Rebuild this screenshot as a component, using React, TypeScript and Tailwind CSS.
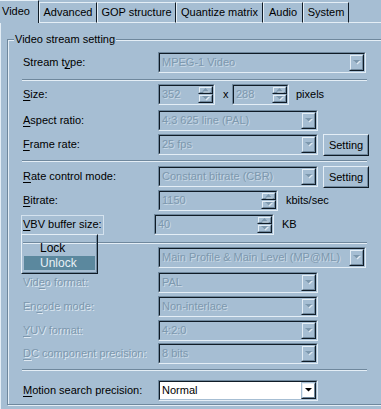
import React from 'react';

// classic Win9x 3D colours, bluish scheme
// face #a6bed3, highlight #e4eef6, shadow #6f889d, dark #0f1b26, disabled text #7d98ae

function Tri({ up, off }: { up?: boolean; off?: boolean }) {
  const pts = up ? '3.5,0 7,3.5 0,3.5' : '0,0 7,0 3.5,3.5';
  return (
    <svg width="8" height="5" viewBox="0 0 8 5" className="block">
      {off && <polygon points={pts} transform="translate(1,1)" fill="#dfe9f2" />}
      <polygon points={pts} fill={off ? '#7d98ae' : '#000000'} />
    </svg>
  );
}

function Sunken({ className = '', white, children }: { className?: string; white?: boolean; children: React.ReactNode }) {
  return (
    <div className={`flex h-[21px] shrink-0 border border-t-[#6f889d] border-l-[#6f889d] border-r-[#e4eef6] border-b-[#e4eef6] ${className}`}>
      <div className={`flex min-w-0 flex-1 border border-t-[#0f1b26] border-l-[#0f1b26] border-r-[#a6bed3] border-b-[#a6bed3] ${white ? 'bg-white' : ''}`}>
        {children}
      </div>
    </div>
  );
}

function SmallBtn({ className = '', children }: { className?: string; children: React.ReactNode }) {
  return (
    <div className={`border border-t-[#a6bed3] border-l-[#a6bed3] border-r-[#0f1b26] border-b-[#0f1b26] ${className}`}>
      <div className="flex h-full w-full items-center justify-center border border-t-[#e4eef6] border-l-[#e4eef6] border-r-[#6f889d] border-b-[#6f889d]">
        {children}
      </div>
    </div>
  );
}

function FieldText({ text, off }: { text: string; off?: boolean }) {
  return (
    <span
      className={`flex-1 self-center truncate pl-[2px] ${off ? 'text-[#7d98ae] [text-shadow:1px_1px_0_#c9d9e6]' : 'text-black'}`}
    >
      {text}
    </span>
  );
}

function Combo({ text, wide, white }: { text: string; wide?: boolean; white?: boolean }) {
  return (
    <Sunken className={wide ? 'w-[208px]' : 'w-[160px]'} white={white}>
      <FieldText text={text} off={!white} />
      <SmallBtn className="h-full w-[15px] shrink-0">
        <Tri off={!white} />
      </SmallBtn>
    </Sunken>
  );
}

function Spin({ text, className }: { text: string; className: string }) {
  return (
    <Sunken className={className}>
      <FieldText text={text} off />
      <div className="flex w-[15px] shrink-0 flex-col">
        <SmallBtn className="h-[8px] w-full">
          <Tri up off />
        </SmallBtn>
        <SmallBtn className="h-[9px] w-full">
          <Tri off />
        </SmallBtn>
      </div>
    </Sunken>
  );
}

function SettingBtn() {
  return (
    <div className="ml-[5px] h-[22px] w-[46px] shrink-0 border border-t-[#e4eef6] border-l-[#e4eef6] border-r-[#0f1b26] border-b-[#0f1b26]">
      <div className="flex h-full w-full items-center justify-center border border-t-[#a6bed3] border-l-[#a6bed3] border-r-[#6f889d] border-b-[#6f889d] text-black">
        Setting
      </div>
    </div>
  );
}

function Label({ pre = '', u, post, off }: { pre?: string; u: string; post: string; off?: boolean }) {
  return (
    <div
      className={`w-[135px] shrink-0 self-center whitespace-nowrap ${off ? 'text-[#7d98ae] [text-shadow:1px_1px_0_#dfe9f2]' : 'text-black'}`}
    >
      {pre}
      <span className="underline underline-offset-[2px]">{u}</span>
      {post}
    </div>
  );
}

function Sep({ className }: { className: string }) {
  return <div className={`ml-[14px] h-[2px] w-[345px] border-t border-b border-t-[#6f889d] border-b-[#e4eef6] ${className}`} />;
}

function Row({ className, children }: { className: string; children: React.ReactNode }) {
  return <div className={`flex h-[21px] items-center pl-[15px] ${className}`}>{children}</div>;
}

const tabs = [
  { name: 'Advanced', w: 'w-[58px]' },
  { name: 'GOP structure', w: 'w-[79px]' },
  { name: 'Quantize matrix', w: 'w-[87px]' },
  { name: 'Audio', w: 'w-[40px]' },
  { name: 'System', w: 'w-[46px]' },
];

export default function App() {
  return (
    <div
      className="relative h-[409px] w-[381px] overflow-hidden bg-[#a6bed3] text-[11px] leading-none"
      style={{ fontFamily: '"Liberation Sans", Arial, sans-serif' }}
    >
      {/* tab strip */}
      <div className="flex h-[23px] items-end">
        <div className="flex h-[23px] w-[39px] shrink-0 items-center border-r border-t border-t-[#e4eef6] border-r-[#0f1b26] pl-[2px] pb-[1px] text-black">
          Video
        </div>
        {tabs.map((t) => (
          <div
            key={t.name}
            className={`flex h-[21px] shrink-0 items-center justify-center whitespace-nowrap border-l border-r border-t border-b border-l-[#e4eef6] border-t-[#e4eef6] border-r-[#0f1b26] border-b-[#e4eef6] text-black ${t.w}`}
          >
            {t.name}
          </div>
        ))}
        <div className="h-[1px] flex-1 bg-[#e4eef6]" />
      </div>

      {/* page */}
      <div className="h-[386px] border-l border-l-[#e4eef6] pt-[16px]">
        <div className="relative ml-[6px] w-[400px] border border-[#6f889d] pb-[3px] shadow-[inset_1px_1px_0_#e4eef6,1px_1px_0_#e4eef6]">
          <div className="absolute left-[6px] top-[-6px] bg-[#a6bed3] px-[1px] text-black">Video stream setting</div>

          <Row className="mt-[12px]">
            <Label pre="Stream t" u="y" post="pe:" />
            <Combo text="MPEG-1 Video" wide />
          </Row>
          <Sep className="mt-[6px]" />

          <Row className="mt-[3px]">
            <Label u="S" post="ize:" />
            <Spin text="352" className="w-[57px]" />
            <span className="ml-[8px] w-[9px] text-black">x</span>
            <Spin text="288" className="w-[57px]" />
            <span className="ml-[7px] text-black">pixels</span>
          </Row>
          <Row className="mt-[5px]">
            <Label u="A" post="spect ratio:" />
            <Combo text="4:3 625 line (PAL)" />
          </Row>
          <Row className="mt-[3px] items-start">
            <Label u="F" post="rame rate:" />
            <Combo text="25 fps" />
            <SettingBtn />
          </Row>
          <Sep className="mt-[5px]" />

          <Row className="mt-[4px] items-start">
            <Label u="R" post="ate control mode:" />
            <Combo text="Constant bitrate (CBR)" />
            <SettingBtn />
          </Row>
          <Row className="mt-[3px]">
            <Label u="B" post="itrate:" />
            <Spin text="1150" className="w-[120px]" />
            <span className="ml-[8px] text-black">kbits/sec</span>
          </Row>
          <Row className="mt-[3px]">
            <div className="-ml-[2px] mr-[-2px] w-[135px] shrink-0">
              <div className="inline-flex h-[20px] items-center border border-[#d4e2ee] px-[1px] text-black">
                <span className="underline underline-offset-[2px]">V</span>BV buffer size:
              </div>
            </div>
            <Spin text="40" className="w-[120px]" />
            <span className="ml-[8px] text-black">KB</span>
          </Row>
          <Sep className="mt-[7px]" />

          <Row className="mt-[3px]">
            <div className="w-[135px] shrink-0" />
            <Combo text="Main Profile & Main Level (MP@ML)" wide />
          </Row>
          <Row className="mt-[4px]">
            <Label pre="Vid" u="e" post="o format:" off />
            <Combo text="PAL" />
          </Row>
          <Row className="mt-[3px]">
            <Label pre="En" u="c" post="ode mode:" off />
            <Combo text="Non-interlace" />
          </Row>
          <Row className="mt-[3px]">
            <Label u="Y" post="UV format:" off />
            <Combo text="4:2:0" />
          </Row>
          <Row className="mt-[2px]">
            <Label u="D" post="C component precision:" off />
            <Combo text="8 bits" />
          </Row>
          <Sep className="mt-[5px]" />

          <Row className="mt-[9px]">
            <Label u="M" post="otion search precision:" />
            <Combo text="Normal" white />
          </Row>
        </div>
      </div>

      {/* popup menu over the VBV label */}
      <div className="absolute left-[21px] top-[234px] h-[40px] w-[77px] border border-t-[#e4eef6] border-l-[#e4eef6] border-r-[#0f1b26] border-b-[#0f1b26]">
        <div className="flex h-full w-full flex-col border border-t-[#a6bed3] border-l-[#a6bed3] border-r-[#6f889d] border-b-[#6f889d] p-[1px]">
          <div className="flex h-[19px] items-center pl-[16px] pt-[2px] text-[12px] text-black">Lock</div>
          <div className="flex h-[14px] items-center bg-[#5b889e] pl-[16px] text-[12px] text-[#e8f0f6]">Unlock</div>
        </div>
      </div>
    </div>
  );
}
